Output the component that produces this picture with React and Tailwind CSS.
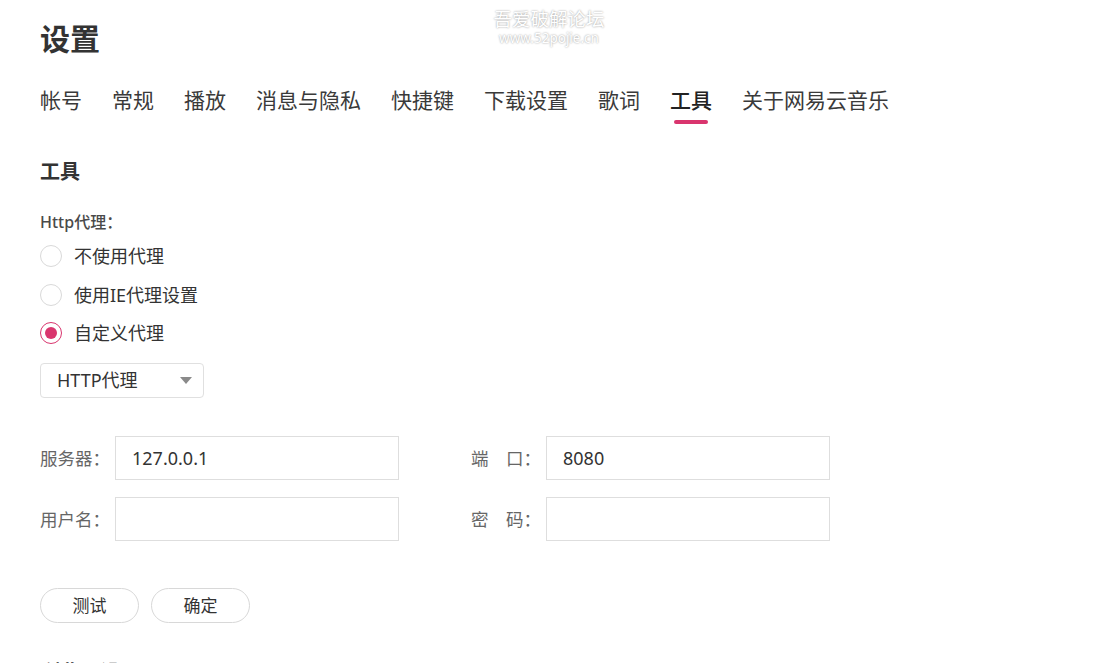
import React, { useState } from 'react';

const tabs = ['帐号', '常规', '播放', '消息与隐私', '快捷键', '下载设置', '歌词', '工具', '关于网易云音乐'];
const proxyModes = ['不使用代理', '使用IE代理设置', '自定义代理'];

function Radio({ checked, label, onClick }) {
  return (
    <div className="flex items-center h-[22px] cursor-pointer" onClick={onClick}>
      {checked ? (
        <span className="w-[22px] h-[22px] rounded-full border-[1.5px] border-[#d9356e] flex items-center justify-center">
          <span className="w-[12px] h-[12px] rounded-full bg-[#d9356e]" />
        </span>
      ) : (
        <span className="w-[22px] h-[22px] rounded-full border-[1.5px] border-[#d9d9d9]" />
      )}
      <span className="ml-[12px] text-[18px] leading-[22px] text-[#333]">{label}</span>
    </div>
  );
}

function Field({ label, value }) {
  return (
    <div className="flex items-center">
      <span className="w-[75px] text-[17.5px] leading-[20px] text-[#666] whitespace-pre">{label}</span>
      <div className="w-[284px] h-[44px] border border-[#dedede] flex items-center px-[16px] text-[18px] text-[#333]">
        {value}
      </div>
    </div>
  );
}

export default function App() {
  const [active, setActive] = useState('工具');
  const [mode, setMode] = useState('自定义代理');

  return (
    <div
      className="relative h-screen overflow-hidden bg-white pl-[40px]"
      style={{ fontFamily: '"Noto Sans", "Noto Sans CJK SC", sans-serif' }}
    >
      {/* watermark */}
      <div className="absolute left-[493px] top-[8px] w-[112px] flex flex-col items-center text-white [text-shadow:0_0_2px_rgba(0,0,0,0.45)]">
        <span className="text-[18.5px] leading-[22px]">吾爱破解论坛</span>
        <span className="text-[13.5px] leading-[16px]">www.52pojie.cn</span>
      </div>

      <h1 className="mt-[24px] text-[30px] leading-[30px] font-bold text-[#333]">设置</h1>

      <div className="mt-[36px] flex gap-[30px]">
        {tabs.map(t => (
          <div
            key={t}
            onClick={() => setActive(t)}
            className={
              'relative text-[21px] leading-[21px] cursor-pointer ' +
              (t === active ? 'text-[#222] font-medium' : 'text-[#3a3a3a]')
            }
          >
            {t}
            {t === active && (
              <span className="absolute left-1/2 -translate-x-1/2 top-[30px] w-[34px] h-[4px] rounded-full bg-[#d9356e]" />
            )}
          </div>
        ))}
      </div>

      <h2 className="mt-[51px] text-[20px] leading-[20px] font-bold text-[#333]">工具</h2>

      <div className="mt-[32px] text-[16px] leading-[16px] font-medium text-[#4a4a4a]">Http代理：</div>

      <div className="mt-[15px] flex flex-col gap-[16.5px]">
        {proxyModes.map(m => (
          <Radio key={m} label={m} checked={mode === m} onClick={() => setMode(m)} />
        ))}
      </div>

      <div className="mt-[19px] w-[164px] h-[35px] border border-[#e0e0e0] rounded-[4px] flex items-center justify-between pl-[16px] pr-[11px]">
        <span className="text-[18px] text-[#333]">HTTP代理</span>
        <span className="w-0 h-0 border-l-[6px] border-r-[6px] border-t-[7px] border-l-transparent border-r-transparent border-t-[#8a8a8a]" />
      </div>

      <div className="mt-[38px] grid grid-cols-[359px_360px] gap-x-[72px] gap-y-[17px]">
        <Field label="服务器：" value="127.0.0.1" />
        <Field label="端　口：" value="8080" />
        <Field label="用户名：" value="" />
        <Field label="密　码：" value="" />
      </div>

      <div className="mt-[47px] flex gap-[12px]">
        <button className="w-[99px] h-[35px] rounded-full border border-[#d8d8d8] text-[17px] text-[#333]">测试</button>
        <button className="w-[99px] h-[35px] rounded-full border border-[#d8d8d8] text-[17px] text-[#333]">确定</button>
      </div>

      <h2 className="mt-[40px] text-[20px] leading-[20px] font-bold text-[#333]">浏览器设置</h2>
    </div>
  );
}
